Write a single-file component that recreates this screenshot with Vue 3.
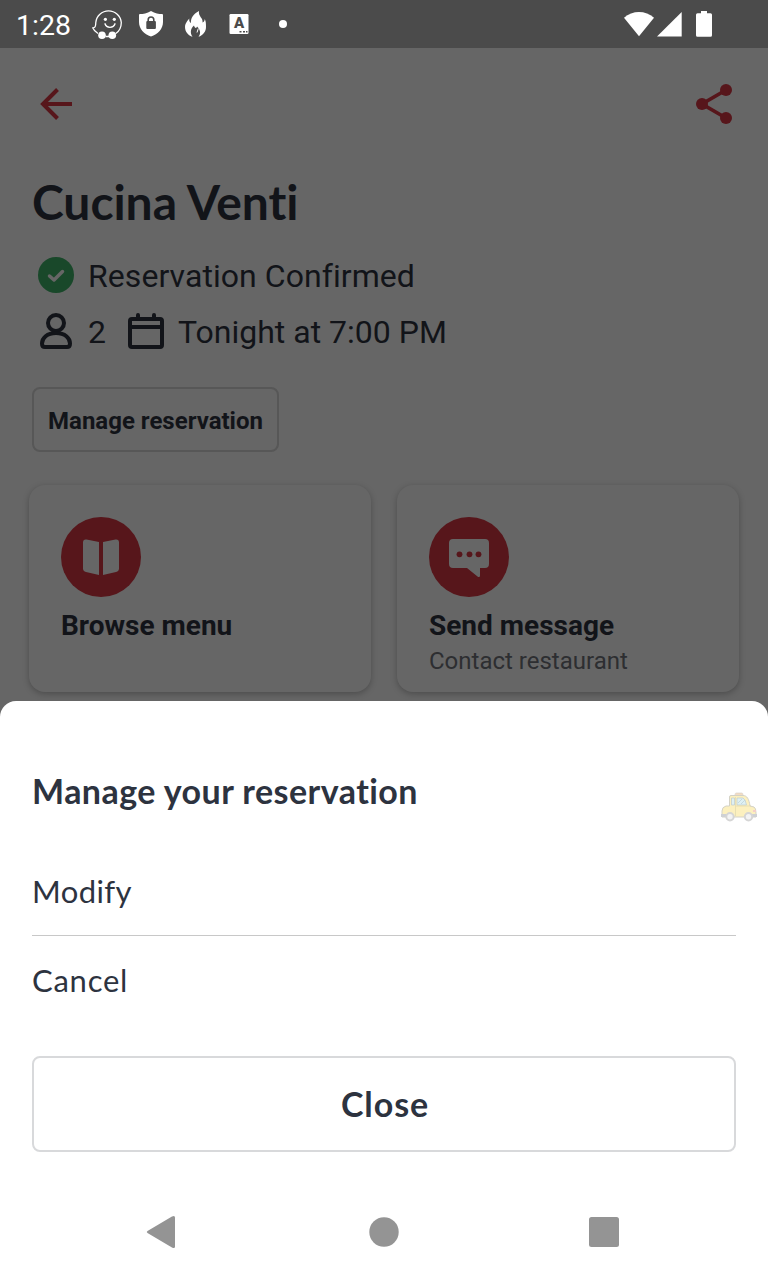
<script setup>
const options = ['Modify', 'Cancel']
</script>

<template>
  <div class="screen">
    <div class="status">
      <span class="clock">1:28</span>
      <svg class="status-icons" width="220" height="48" viewBox="80 0 220 48">
        <path d="M98 33.500C95.500 32 93.500 29.800 92.700 27.800C95 28 95.800 26.500 95.800 22.500A12.800 12.800 0 0 1 121.300 22.500C121.300 27.500 119 31.500 115.500 33.800M105.500 36.500H109" fill="none" stroke="#fff" stroke-width="1.3" stroke-linejoin="round" />
        <circle cx="102" cy="35.200" r="3.800" fill="#fff" /><circle cx="112.300" cy="35.200" r="3.800" fill="#fff" />
        <circle cx="105.400" cy="19.300" r="1.600" fill="#fff" /><circle cx="114.300" cy="19.300" r="1.600" fill="#fff" />
        <path d="M105 23.800C106.500 28.500 113.500 28.500 115 23.800" fill="none" stroke="#fff" stroke-width="1.4" stroke-linecap="round" />
        <path d="M151 11C147 13.500 143 14 140 14Q139 14 139 15V22C139 29 144 34 151 36.500C158 34 163 29 163 22V15Q163 14 162 14C159 14 155 13.500 151 11Z" fill="#fff" />
        <rect x="146.300" y="21" width="9.600" height="8" rx="1" fill="#4b4b4b" />
        <path d="M148.200 22V19.800Q148.200 17 151 17Q153.800 17 153.800 19.800V22" fill="none" stroke="#4b4b4b" stroke-width="1.600" />
        <path d="M199 11C193 14 190.500 18.500 191 23C189.500 22.500 189 20.500 189.300 18.500C186 22 185 24.500 185 27C185 32 188.500 35.500 192.500 36.800C189.500 32.500 191 28 194 25.500C194.500 28 196.500 29 197 26.500C200.500 30 201 33.500 198.500 36.800C203 35.500 206 31.500 206 27C206 24 206 21.500 204.800 19C204.500 21 204 22 202.500 22.500C203.500 18 198 16.500 199 11Z" fill="#fff" />
        <path d="M198.300 28.500L197 32.500" stroke="#fff" stroke-width="1" />
        <rect x="229.500" y="14" width="19" height="20" rx="1.200" fill="#fff" />
        <text x="239" y="27.900" class="badge-letter" text-anchor="middle">A</text>
        <path d="M239.500 31.700h2m1.500 0h2m1 0h1.500" stroke="#4b4b4b" stroke-width="1.500" />
        <circle cx="283" cy="24" r="4" fill="#fff" />
      </svg>
      <svg class="signals" width="100" height="48" viewBox="620 0 100 48" fill="#fff">
        <path d="M624 17.700C632.500 10 645.500 10 654 17.700L639 36.300Z" />
        <path d="M657 36.600L681.700 12V36.600Z" />
        <path d="M701 11h6v2.300h3.500q1.500 0 1.500 1.500v20.500q0 1.500-1.500 1.500h-13q-1.500 0-1.500-1.500V14.800q0-1.500 1.500-1.500h3.500Z" />
      </svg>
    </div>

    <main class="page">
      <header class="toolbar">
        <svg width="34" height="34" viewBox="39 87 34 34" fill="none" stroke="#57161b" stroke-width="4"><path d="M72 104H43M57.500 89.500L43 104L57.500 118.500" /></svg>
        <svg width="38" height="42" viewBox="695 83 38 42" fill="#57161b"><path d="M726 90L702 104L726 118" fill="none" stroke="#57161b" stroke-width="3.700" /><circle cx="702" cy="104" r="6" /><circle cx="726" cy="90" r="6" /><circle cx="726" cy="118" r="6" /></svg>
      </header>
      <h1>Cucina Venti</h1>
      <div class="info confirmed">
        <svg width="36" height="38" viewBox="38 257 36 38"><circle cx="56" cy="275" r="18" fill="#19482a" /><path d="M49.500 276L54 280L62.500 271.500" fill="none" stroke="#666" stroke-width="3.500" stroke-linecap="round" stroke-linejoin="round" /></svg>
        <span>Reservation Confirmed</span>
      </div>
      <div class="info">
        <svg width="36" height="38" viewBox="38 313 36 38" fill="none" stroke="#121419" stroke-width="4"><circle cx="56" cy="323" r="8" /><path d="M56 333C47 333 42 338 42 343.500Q42 347 45 347H67Q70 347 70 343.500C70 338 65 333 56 333Z" /></svg>
        <span>2</span>
        <svg class="calendar" width="36" height="38" viewBox="128 313 36 38" fill="none" stroke="#121419" stroke-width="4"><rect x="130" y="319" width="32" height="28" rx="2" /><path d="M130 327H162" /><path d="M138 319V315M154 319V315" stroke-linecap="round" /></svg>
        <span>Tonight at 7:00 PM</span>
      </div>
      <button class="manage">Manage reservation</button>
      <div class="cards">
        <section class="card">
          <svg width="80" height="80" viewBox="0 0 80 80"><circle cx="40" cy="40" r="40" fill="#57161b" /><path d="M38 25V58L25 55Q22 54.300 22 51.500V25.500Q22 22 25.500 22.500ZM42 25V58L55 55Q58 54.300 58 51.500V25.500Q58 22 54.500 22.500Z" fill="#666" /></svg>
          <h2>Browse menu</h2>
        </section>
        <section class="card">
          <svg width="80" height="80" viewBox="0 0 80 80"><circle cx="40" cy="40" r="40" fill="#57161b" /><path d="M24 22H56Q60 22 60 26V47Q60 51 56 51H51V58.500Q51 61 48.500 59.500L38 51H24Q20 51 20 47V26Q20 22 24 22Z" fill="#666" /><g fill="#57161b"><circle cx="30.500" cy="37.300" r="2.900" /><circle cx="40.500" cy="37.300" r="2.900" /><circle cx="49.500" cy="37.300" r="2.900" /></g></svg>
          <h2>Send message</h2>
          <p>Contact restaurant</p>
        </section>
      </div>
    </main>

    <section class="sheet">
      <h3>Manage your reservation</h3>
      <div v-for="option in options" :key="option" class="option" :class="option.toLowerCase()"><span>{{ option }}</span></div>
      <button class="close"><span>Close</span></button>
      <svg class="taxi" width="38" height="32" viewBox="720 791 38 32">
        <rect x="735" y="793" width="8" height="3" rx="1.500" fill="#f3ddc4" stroke="#d5cdc6" stroke-width=".6" />
        <path d="M729.500 806V797Q729.500 795.500 731 795.500H743C747 795.500 749 799 750 806L754 807Q756 808 756 813V817H722V811Q722 807 726 806Z" fill="#fcf0bf" stroke="#d4d2c6" stroke-width="1" />
        <path d="M731.500 798H734.500V805H731.500ZM737 798H743Q745.500 799 746.500 805H737Z" fill="#def0f3" stroke="#c3cfd0" stroke-width=".8" />
        <path d="M738 803l4-4m-1 5l4-4" stroke="#bfd3d8" stroke-width=".8" />
        <path d="M735.500 797V816M736 806H751" stroke="#dfd7ae" stroke-width=".7" />
        <path d="M721 814H727V817H721ZM751 814H757V817H751Z" fill="#cfd1d4" />
        <path d="M753 810h3v2h-3z" fill="#f4cfc9" />
        <circle cx="730" cy="816.800" r="3.700" fill="#f3f3f3" stroke="#d5d5d5" stroke-width="2" />
        <circle cx="748.500" cy="816.800" r="3.700" fill="#f3f3f3" stroke="#d5d5d5" stroke-width="2" />
      </svg>
    </section>

    <nav class="navigation">
      <svg width="480" height="40" viewBox="144 1212 480 40" fill="#949494">
        <path d="M147.500 1231L172 1216.400Q175 1215 175 1217.500V1246.500Q175 1249 172 1247.600L147.500 1233Q146 1232 147.500 1231Z" />
        <circle cx="384" cy="1232" r="14.700" /><rect x="589" y="1217" width="30" height="30" rx="2.500" />
      </svg>
    </nav>
  </div>
</template>

<style>
body { margin: 0; }
</style>

<style scoped>
* { box-sizing: border-box; }
svg { display: block; flex: none; }
h1, h2, h3, p { margin: 0; white-space: nowrap; }
.screen { width: 768px; height: 1280px; overflow: hidden; display: flex; flex-direction: column; background: #666; color: #121419; font-family: Roboto, sans-serif; }
.status { height: 48px; flex: none; display: flex; background: #4b4b4b; color: #fff; }
.clock { width: 80px; padding-left: 16px; font-size: 28.5px; line-height: 51px; }
.signals { margin-left: 320px; }
.badge-letter { font: 900 15px Roboto, sans-serif; fill: #4b4b4b; }
.page { height: 653px; flex: none; padding: 0 29px; }
.toolbar { height: 112px; padding: 0 6px 0 10px; display: flex; align-items: center; justify-content: space-between; }
h1 { height: 88px; padding-left: 3px; font: 700 48px/84px Lato, sans-serif; letter-spacing: -0.05px; }
.info { height: 56px; padding-left: 9px; display: flex; align-items: center; font-size: 32px; line-height: 56px; white-space: nowrap; }
.confirmed { letter-spacing: 0.06px; }
.info span { margin-left: 14px; }
.info .calendar { margin-left: 22px; }
.manage { display: block; width: 247px; height: 65px; margin: 27px 0 0 3px; padding: 3px 0 0; border: 2px solid #575757; border-radius: 8px; background: transparent; color: inherit; font: 700 24px/30px Roboto, sans-serif; white-space: nowrap; }
.cards { display: flex; gap: 26px; margin-top: 33px; }
.card { width: 342px; height: 207px; padding: 32px; border-radius: 16px; background: #666; box-shadow: 0 2px 6px rgba(0, 0, 0, .25); }
h2 { margin-top: 10px; font-size: 28px; line-height: 37px; }
.card p { font-size: 24px; line-height: 34px; color: #2d2e31; }
.sheet { position: relative; height: 483px; flex: none; padding: 59px 32px 0; border-radius: 16px 16px 0 0; background: #fff; color: #2d333f; font-family: Lato, sans-serif; font-variant-ligatures: none; }
h3 { height: 88px; font-size: 34px; line-height: 61px; font-weight: 700; letter-spacing: 0.45px; }
.option { height: 88px; font-size: 31px; line-height: 87px; letter-spacing: 0.4px; }
.modify { border-bottom: 1px solid #c8c8c8; }
.cancel { height: 120px; letter-spacing: 0.75px; }
.option.cancel { line-height: 89px; }
.close { display: block; width: 704px; height: 96px; border: 2px solid #d8d9db; border-radius: 8px; background: #fff; color: inherit; font: 700 34px/50px Lato, sans-serif; letter-spacing: 0.9px; padding: 0 0 0 2px; }
.taxi { position: absolute; left: 720px; top: 90px; }
.navigation { height: 96px; flex: none; display: flex; align-items: center; justify-content: center; background: #fff; }
</style>
